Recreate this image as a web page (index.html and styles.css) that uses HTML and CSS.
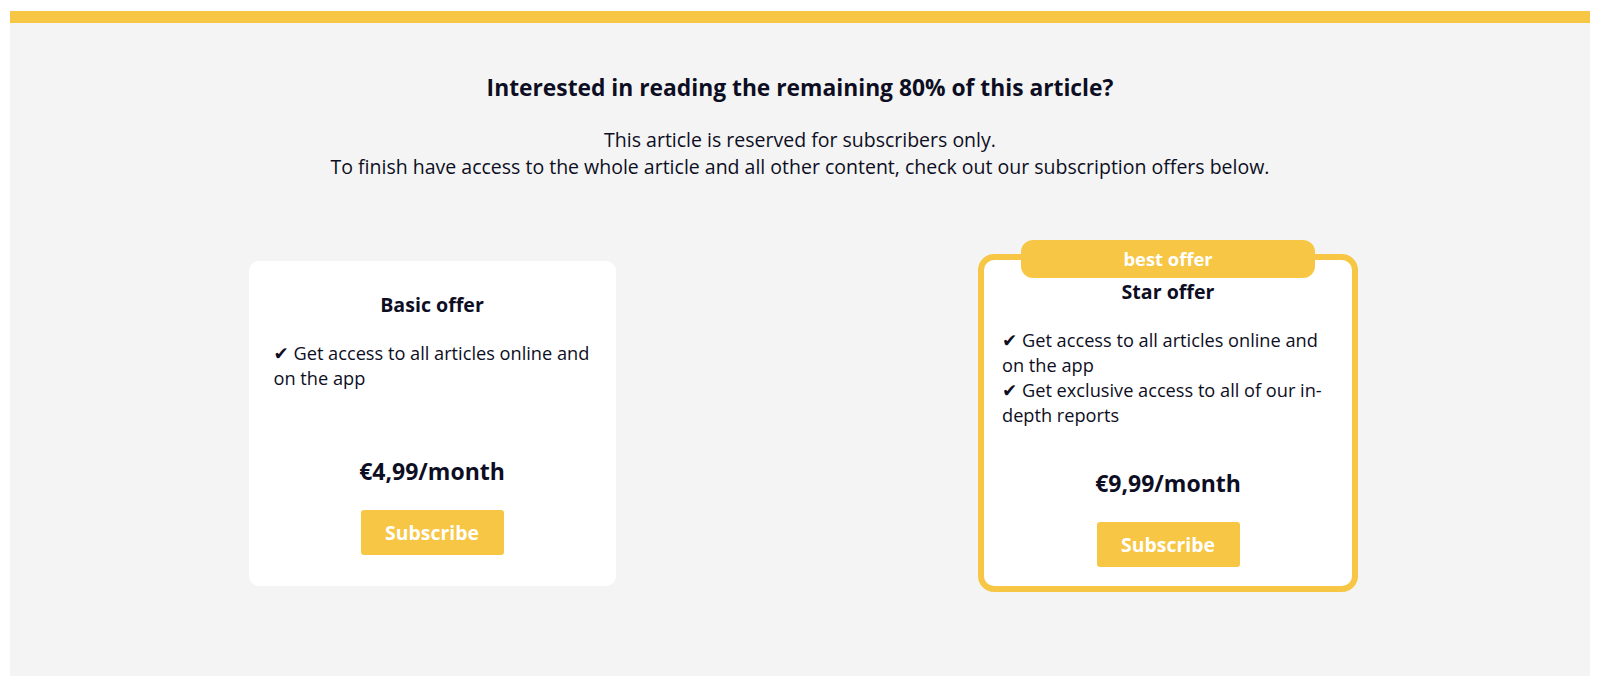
FILE: index.html
```html
<!DOCTYPE html>
<html lang="en">
<head>
<meta charset="utf-8">
<title>Paywall</title>
<link rel="stylesheet" href="styles.css">
</head>
<body>
<div class="page">
  <section class="paywall">
    <h2 class="paywall-title">Interested in reading the remaining 80% of this article?</h2>
    <p class="paywall-text">This article is reserved for subscribers only.<br>To finish have access to the whole article and all other content, check out our subscription offers below.</p>
    <div class="offers">
      <div class="offer offer-basic">
        <h3 class="offer-name">Basic offer</h3>
        <div class="offer-features">
          <div class="feature">&#10004; Get access to all articles online and on the app</div>
        </div>
        <div class="offer-price">€4,99/month</div>
        <button class="offer-btn">Subscribe</button>
      </div>
      <div class="offer offer-star">
        <div class="badge">best offer</div>
        <h3 class="offer-name">Star offer</h3>
        <div class="offer-features">
          <div class="feature">&#10004; Get access to all articles online and on the app</div>
          <div class="feature">&#10004; Get exclusive access to all of our in-depth reports</div>
        </div>
        <div class="offer-price">€9,99/month</div>
        <button class="offer-btn">Subscribe</button>
      </div>
    </div>
  </section>
</div>
</body>
</html>
```

FILE: styles.css
```css
* { box-sizing: border-box; }
html, body { margin: 0; padding: 0; background: #ffffff; }
body {
  font-family: "Open Sans", "DejaVu Sans", sans-serif;
  color: #0d0e23;
}
.page {
  padding: 11px 10px 8px 10px;
}
.paywall {
  height: 665px;
  background: #f4f4f4;
  border-top: 12px solid #f7c644;
  padding-top: 51px;
  text-align: center;
}
.paywall-title {
  margin: 0;
  font-size: 22.8px;
  line-height: 28px;
  font-weight: 700;
}
.paywall-text {
  margin: 25px 0 0 0;
  font-size: 19.5px;
  line-height: 26.5px;
  font-weight: 400;
}
.offers {
  margin-top: 74px;
  display: grid;
  grid-template-columns: 736px 736px;
  justify-content: center;
  align-items: center;
}
.offer {
  justify-self: center;
  background: #ffffff;
  border-radius: 10px;
  display: flex;
  flex-direction: column;
  align-items: center;
  position: relative;
}
.offer-basic {
  width: 367px;
  padding: 31px 25px;
}
.offer-star {
  width: 380px;
  padding: 19px 18px;
  border: 6px solid #f7c644;
  border-radius: 16px;
}
.badge {
  position: absolute;
  top: -20px;
  left: 50%;
  transform: translateX(-50%);
  width: 294px;
  height: 38px;
  border-radius: 12px;
  background: #f7c644;
  color: #ffffff;
  font-size: 18.4px;
  font-weight: 700;
  line-height: 38px;
}
.offer-name {
  margin: 0;
  font-size: 19.6px;
  line-height: 26px;
  font-weight: 700;
}
.offer-features {
  margin-top: 23px;
  min-height: 75px;
  align-self: stretch;
  text-align: left;
  font-size: 18.2px;
  line-height: 25px;
}
.offer-price {
  margin-top: 40px;
  font-size: 23px;
  line-height: 30px;
  font-weight: 700;
}
.offer-btn {
  margin-top: 24px;
  width: 143px;
  height: 45px;
  border: none;
  border-radius: 3px;
  background: #f7c644;
  color: #ffffff;
  font-family: "Open Sans", "DejaVu Sans", sans-serif;
  font-size: 19.4px;
  font-weight: 700;
  padding: 0;
}
```
